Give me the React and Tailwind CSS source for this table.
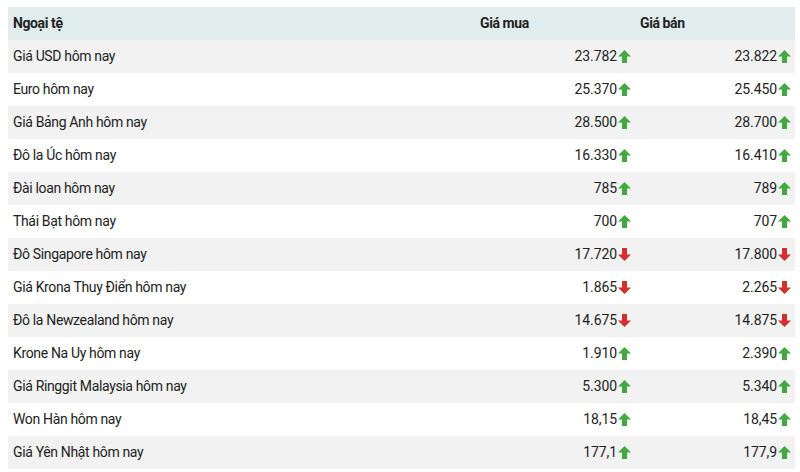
const rows = [
  ['Giá USD hôm nay', '23.782', 'up', '23.822', 'up'],
  ['Euro hôm nay', '25.370', 'up', '25.450', 'up'],
  ['Giá Bảng Anh hôm nay', '28.500', 'up', '28.700', 'up'],
  ['Đô la Úc hôm nay', '16.330', 'up', '16.410', 'up'],
  ['Đài loan hôm nay', '785', 'up', '789', 'up'],
  ['Thái Bạt hôm nay', '700', 'up', '707', 'up'],
  ['Đô Singapore hôm nay', '17.720', 'down', '17.800', 'down'],
  ['Giá Krona Thuy Điển hôm nay', '1.865', 'down', '2.265', 'down'],
  ['Đô la Newzealand hôm nay', '14.675', 'down', '14.875', 'down'],
  ['Krone Na Uy hôm nay', '1.910', 'up', '2.390', 'up'],
  ['Giá Ringgit Malaysia hôm nay', '5.300', 'up', '5.340', 'up'],
  ['Won Hàn hôm nay', '18,15', 'up', '18,45', 'up'],
  ['Giá Yên Nhật hôm nay', '177,1', 'up', '177,9', 'up'],
];

function Arrow({ dir }) {
  if (dir === 'down') {
    return (
      <svg className="w-[13px] h-[13px] ml-[1px] text-[#d32f2f]" viewBox="0 0 13 13" fill="currentColor">
        <path d="M6.5 13L13 6.5H9V0H4V6.5H0Z" />
      </svg>
    );
  }
  return (
    <svg className="w-[13px] h-[13px] ml-[1px] text-[#43a83f]" viewBox="0 0 13 13" fill="currentColor">
      <path d="M6.5 0L13 6.5H9V13H4V6.5H0Z" />
    </svg>
  );
}

function Price({ value, dir }) {
  return (
    <div className="flex items-center justify-end pr-[4px] tracking-[-0.1px]">
      <span>{value}</span>
      <Arrow dir={dir} />
    </div>
  );
}

export default function App() {
  return (
    <div className="w-[800px] h-[472px] bg-white pt-[7px] px-[8px] pr-[5px] text-[14px] text-[#222] font-['Roboto',sans-serif]">
      <div className="grid grid-cols-[467px_160px_160px] h-[33px] items-center bg-[#e1eded] font-bold tracking-[-0.4px]">
        <div className="pl-[5px]">Ngoại tệ</div>
        <div className="pl-[5px]">Giá mua</div>
        <div className="pl-[5px]">Giá bán</div>
      </div>
      {rows.map((r, i) => (
        <div
          key={r[0]}
          className={`grid grid-cols-[467px_160px_160px] h-[33px] items-center ${i % 2 === 0 ? 'bg-[#f2f2f2]' : 'bg-white'}`}
        >
          <div className="pl-[5px] tracking-[-0.35px]">{r[0]}</div>
          <Price value={r[1]} dir={r[2]} />
          <Price value={r[3]} dir={r[4]} />
        </div>
      ))}
    </div>
  );
}
